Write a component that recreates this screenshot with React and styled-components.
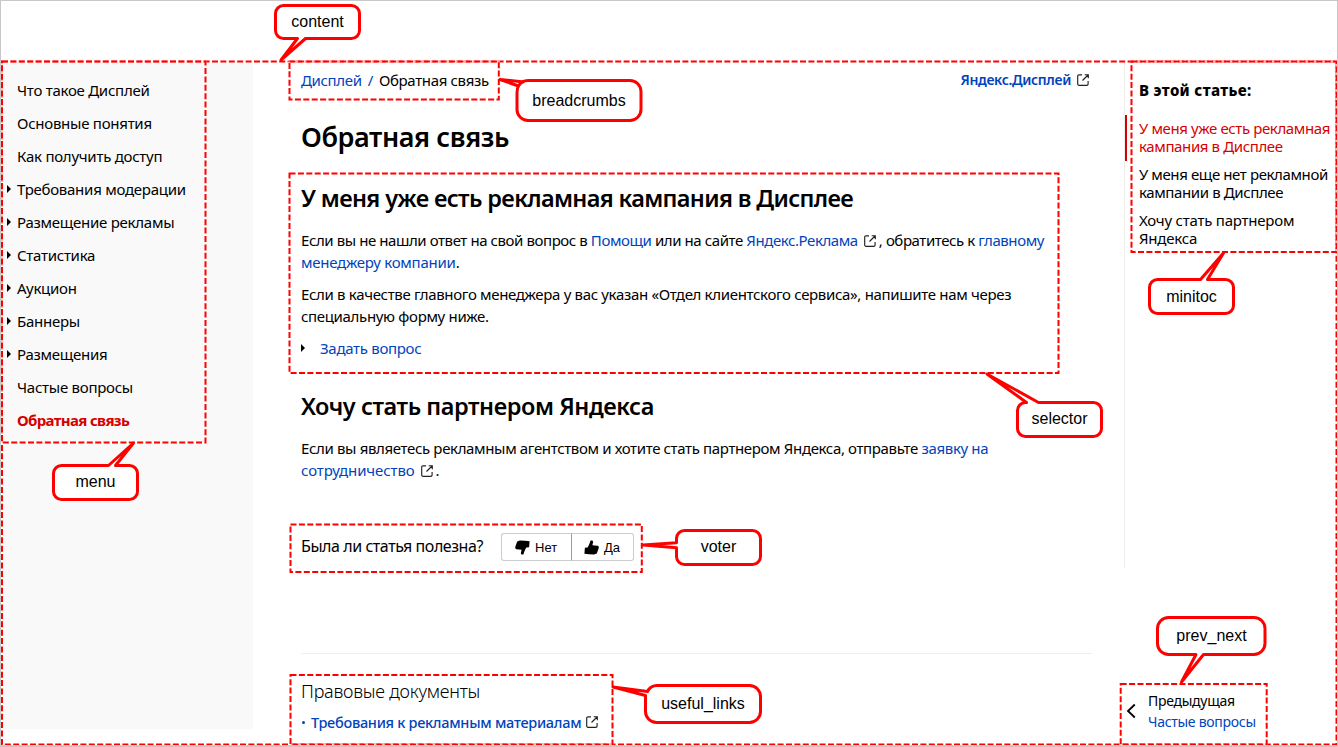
import React from "react";
import styled, { createGlobalStyle } from "styled-components";

const GlobalStyle = createGlobalStyle`
  *, *::before, *::after { box-sizing: border-box; }
  body { margin: 0; background: #fff; color: #000; }
`;

const BLUE = "#0044bb";
const RED = "#d60000";
const MARK = "#ff0000";

const Page = styled.div`
  position: relative;
  width: 1338px;
  height: 747px;
  overflow: hidden;
  border: 1px solid #c8c8c8;
  border-bottom-width: 2px;
  font-family: "Noto Sans", "Open Sans", sans-serif;
  font-size: 15px;
  line-height: 22px;
`;

const Header = styled.header`
  height: 60px;
`;

const Columns = styled.div`
  display: flex;
`;

const Sidebar = styled.nav`
  width: 252px;
  height: 668px;
  padding: 12px 0 0 6px;
  background: #f9f9f9;
`;

const MenuItem = styled.a`
  display: flex;
  align-items: center;
  height: 33px;
  color: ${(p) => (p.$active ? RED : "#000")};
  font-weight: ${(p) => (p.$active ? 700 : 400)};
  letter-spacing: ${(p) => (p.$active ? "-0.64px" : "-0.26px")};
`;

const Marker = styled.i`
  width: 4px;
  height: 8px;
  margin-right: ${(p) => p.$gap}px;
  border: solid transparent;
  border-width: 4px 0 4px 4px;
  border-left-color: ${(p) => (p.$hidden ? "transparent" : "#000")};
`;

const Main = styled.main`
  width: 791px;
  margin-left: 48px;
`;

const TopRow = styled.div`
  display: flex;
  justify-content: space-between;
  padding: 8px 3px 0 0;
`;

const Crumbs = styled.div`
  letter-spacing: -0.35px;
`;

const Link = styled.a`
  color: ${BLUE};
`;

const Slash = styled.span`
  margin: 0 6px;
  color: ${BLUE};
`;

const ServiceLink = styled.a`
  color: ${BLUE};
  font-size: 14px;
  font-weight: 600;
  letter-spacing: -0.35px;
`;

const Title = styled.h1`
  margin: 28px 0 0;
  font-size: 27px;
  font-weight: 600;
  line-height: 36px;
  letter-spacing: -0.4px;
`;

const Heading = styled.h2`
  margin: ${(p) => p.$top}px 0 15px;
  font-size: 23.5px;
  font-weight: 600;
  line-height: 32px;
  letter-spacing: ${(p) => p.$spacing}px;
`;

const Text = styled.p`
  width: 770px;
  margin: 0 0 10px;
`;

const Line = styled.span`
  display: block;
  white-space: nowrap;
  letter-spacing: ${(p) => p.$spacing}px;
`;

const Spoiler = styled.div`
  display: flex;
  align-items: center;
  letter-spacing: -0.3px;
`;

const Voter = styled.div`
  display: flex;
  align-items: center;
  height: 28px;
  margin-top: 52px;
`;

const Question = styled.span`
  width: 200px;
  padding-bottom: 2px;
  font-size: 16px;
  letter-spacing: -0.44px;
`;

const VoteButton = styled.button`
  display: flex;
  align-items: center;
  gap: 5px;
  width: ${(p) => p.$width}px;
  height: 28px;
  padding: 0 0 0 ${(p) => p.$pad}px;
  border: 1px solid #ccc;
  border-left: ${(p) => (p.$last ? "1px solid #999" : "1px solid #ccc")};
  border-right-width: ${(p) => (p.$last ? 1 : 0)}px;
  border-radius: ${(p) => (p.$last ? "0 3px 3px 0" : "3px 0 0 3px")};
  background: #fff;
  color: #000;
  font: 13px "Liberation Sans", Arial, sans-serif;
`;

const Footer = styled.footer`
  margin-top: 92px;
  padding-top: 26px;
  border-top: 1px solid #eee;
`;

const FooterTitle = styled.div`
  font-size: 18px;
  font-weight: 300;
  letter-spacing: -0.23px;
`;

const FooterLink = styled.div`
  display: flex;
  align-items: center;
  margin-top: 9px;
  color: ${BLUE};
  font-size: 14.5px;
  font-weight: 500;
  letter-spacing: -0.28px;
`;

const Bullet = styled.i`
  width: 3px;
  height: 3px;
  margin: 1px 6px 0 1px;
  border-radius: 50%;
  background: ${BLUE};
`;

const Aside = styled.aside`
  width: 213px;
  margin-left: 32px;
`;

const MiniToc = styled.div`
  height: 507px;
  padding-top: 18px;
  border-left: 1px solid #eee;
`;

const TocTitle = styled.div`
  padding-left: 14px;
  margin-bottom: 14px;
  font-weight: 800;
  letter-spacing: 0.35px;
`;

const TocItem = styled.a`
  display: block;
  padding: 4px 0 6px 12px;
  border-left: 2px solid ${(p) => (p.$active ? RED : "transparent")};
  color: ${(p) => (p.$active ? RED : "#000")};
  line-height: 18px;
  letter-spacing: ${(p) => p.$spacing}px;
  white-space: nowrap;
`;

const PrevNext = styled.div`
  display: flex;
  align-items: center;
  gap: 12px;
  margin: 122px 0 0 2px;
  font-size: 14px;
  line-height: 21px;
  letter-spacing: -0.28px;
`;

const Outlines = styled.svg`
  position: absolute;
  left: -1px;
  top: -1px;
  fill: none;
`;

const Bubble = styled.div`
  position: absolute;
  left: ${(p) => p.$x - 1}px;
  top: ${(p) => p.$y - 1}px;
  display: flex;
  align-items: center;
  justify-content: center;
  width: ${(p) => p.$w}px;
  height: ${(p) => p.$h}px;
  padding-bottom: 1px;
  font: 16px/20px "Liberation Sans", Arial, sans-serif;
`;

const ExternalSvg = styled.svg`
  margin: 0 ${(p) => p.$after}px 0 ${(p) => p.$before}px;
  vertical-align: -1px;
  fill: none;
  stroke: #222;
  stroke-width: 1.15;
`;

const External = ({ before = 6, after = 0 }) => (
  <ExternalSvg width="12" height="12" viewBox="0 0 12 12" $before={before} $after={after}>
    <path d="M5 .8H2A1.3 1.3 0 0 0 .7 2.1V10A1.3 1.3 0 0 0 2 11.3H9.8A1.3 1.3 0 0 0 11.1 10V7M5.5 6.5 11 1M7.7.7H11.3V4.3" />
  </ExternalSvg>
);

const Thumb = ({ up }) => (
  <svg width="15" height="15" viewBox="0 0 15 15">
    <path
      transform={up ? "rotate(180 7.5 7.5)" : undefined}
      d="M2.2 1.4 4.8.4 10 .8 14.6 1.2 14.1 7.3 11.4 7.6C10 9.6 9.2 12 8.4 14.4 7 14.9 5.8 14.4 5.9 13L6.6 9.8 1.4 9.2C.2 9 0 7.6.4 6.6Z"
    />
  </svg>
);

const menu = [
  ["Что такое Дисплей"],
  ["Основные понятия"],
  ["Как получить доступ"],
  ["Требования модерации", true],
  ["Размещение рекламы", true],
  ["Статистика", true],
  ["Аукцион", true],
  ["Баннеры", true],
  ["Размещения", true],
  ["Частые вопросы"],
  ["Обратная связь"],
];

const outlines = [
  [2, 61.5, 1334.5, 683],
  [2, 61.5, 203.5, 381],
  [289.5, 61.5, 209.3, 38],
  [289.5, 173.5, 769, 199.5],
  [1131.5, 61.5, 205, 190.5],
  [290.5, 524.5, 351.3, 47.5],
  [290.5, 675, 322, 69.5],
  [1120.7, 684, 146, 60.5],
];

/* Each path is the bubble outline with its pointer, in page coordinates. */
const callouts = [
  { t: "content", b: [274, 4, 87, 36], d: "M297.5 38.5H283.5a8 8 0 0 1-8-8V13.5a8 8 0 0 1 8-8H351.5a8 8 0 0 1 8 8V30.5a8 8 0 0 1-8 8H305.5L281 60Z" },
  { t: "breadcrumbs", b: [515, 80, 128, 43], d: "M518.5 86C520.5 82.5 524 80.5 528 80.5H630a11 11 0 0 1 11 11V109.5a11 11 0 0 1-11 11H528a11 11 0 0 1-11-11V92.5C517 90 517.3 88 518.5 86L500 79.5 524 82" },
  { t: "menu", b: [52, 464, 87, 37], d: "M108.5 465.5H61.5a8 8 0 0 0-8 8V491.5a8 8 0 0 0 8 8H129.5a8 8 0 0 0 8-8V473.5a8 8 0 0 0-8-8H115.5L133.5 443Z" },
  { t: "minitoc", b: [1148, 279, 87, 37], d: "M1200.5 279.5H1157.5a8 8 0 0 0-8 8V305.5a8 8 0 0 0 8 8H1225.5a8 8 0 0 0 8-8V287.5a8 8 0 0 0-8-8H1207.5L1223.5 253Z" },
  { t: "selector", b: [1016, 401, 87, 37], d: "M1026.5 402.5H1025.5a8 8 0 0 0-8 8V428.5a8 8 0 0 0 8 8H1093.5a8 8 0 0 0 8-8V410.5a8 8 0 0 0-8-8H1038.5L987 374Z" },
  { t: "voter", b: [675, 529, 87, 37], d: "M676.5 542.8V538.5a8 8 0 0 1 8-8H752.5a8 8 0 0 1 8 8V556.5a8 8 0 0 1-8 8H684.5a8 8 0 0 1-8-8V547.7L643 545Z" },
  { t: "useful_links", b: [644, 684, 118, 40], d: "M647.5 691.5C649.5 687.5 653 685.5 657 685.5H749.5a11 11 0 0 1 11 11V711.5a11 11 0 0 1-11 11H656.5a11 11 0 0 1-11-11V695.5L613 687Z" },
  { t: "prev_next", b: [1156, 616, 111, 40], d: "M1196 654.5H1168.5a11 11 0 0 1-11-11V628.5a11 11 0 0 1 11-11H1254a11 11 0 0 1 11 11V643.5a11 11 0 0 1-11 11H1203.5L1181.5 682Z" },
];

export default function App() {
  return (
    <Page>
      <GlobalStyle />
      <Header />
      <Columns>
        <Sidebar>
          {menu.map(([label, nested], i) => (
            <MenuItem key={label} $active={i === menu.length - 1}>
              <Marker $gap={6} $hidden={!nested} />
              {label}
            </MenuItem>
          ))}
        </Sidebar>

        <Main>
          <TopRow>
            <Crumbs>
              <Link>Дисплей</Link>
              <Slash>/</Slash>
              Обратная связь
            </Crumbs>
            <ServiceLink>
              Яндекс.Дисплей
              <External />
            </ServiceLink>
          </TopRow>
          <Title>Обратная связь</Title>

          <Heading $top={27} $spacing={-0.64}>
            У меня уже есть рекламная кампания в Дисплее
          </Heading>
          <Text>
            <Line $spacing={-0.42}>
              Если вы не нашли ответ на свой вопрос в <Link>Помощи</Link> или на сайте{" "}
              <Link>Яндекс.Реклама</Link>
              <External after={3} />, обратитесь к <Link>главному</Link>
            </Line>
            <Line $spacing={-0.25}>
              <Link>менеджеру компании</Link>.
            </Line>
          </Text>
          <Text>
            <Line $spacing={-0.33}>
              Если в качестве главного менеджера у вас указан «Отдел клиентского сервиса», напишите нам через
            </Line>
            <Line $spacing={-0.33}>специальную форму ниже.</Line>
          </Text>
          <Spoiler>
            <Marker $gap={15} />
            <Link>Задать вопрос</Link>
          </Spoiler>

          <Heading $top={31} $spacing={-0.44}>
            Хочу стать партнером Яндекса
          </Heading>
          <Text>
            <Line $spacing={-0.355}>
              Если вы являетесь рекламным агентством и хотите стать партнером Яндекса, отправьте{" "}
              <Link>заявку на</Link>
            </Line>
            <Line $spacing={-0.1}>
              <Link>сотрудничество</Link>
              <External after={3} />.
            </Line>
          </Text>

          <Voter>
            <Question>Была ли статья полезна?</Question>
            <VoteButton $width={70} $pad={13}>
              <Thumb />
              Нет
            </VoteButton>
            <VoteButton $width={63} $pad={12} $last>
              <Thumb up />
              Да
            </VoteButton>
          </Voter>

          <Footer>
            <FooterTitle>Правовые документы</FooterTitle>
            <FooterLink>
              <Bullet />
              Требования к рекламным материалам
              <External before={5} />
            </FooterLink>
          </Footer>
        </Main>

        <Aside>
          <MiniToc>
            <TocTitle>В этой статье:</TocTitle>
            <TocItem $active $spacing={-0.38}>У меня уже есть рекламная<br />кампания в Дисплее</TocItem>
            <TocItem $spacing={-0.39}>У меня еще нет рекламной<br />кампании в Дисплее</TocItem>
            <TocItem $spacing={-0.22}>Хочу стать партнером<br />Яндекса</TocItem>
          </MiniToc>
          <PrevNext>
            <svg width="10" height="16" viewBox="0 0 10 16" fill="none" stroke="#000" strokeWidth="1.8">
              <path d="M8.8 1.5 2 8 8.8 14.5" />
            </svg>
            <div>
              <div>Предыдущая</div>
              <Link>Частые вопросы</Link>
            </div>
          </PrevNext>
        </Aside>
      </Columns>

      <Outlines width="1338" height="747">
        {outlines.map(([x, y, width, height], i) => (
          <g key={i} strokeWidth="2">
            <rect x={x} y={y} width={width} height={height} stroke="#fff" strokeOpacity="0.7" />
            <rect x={x} y={y} width={width} height={height} stroke={MARK} strokeDasharray="6 2.4" />
          </g>
        ))}
        {callouts.map((c) => (
          <path key={c.t} d={c.d} fill="#fff" stroke={MARK} strokeWidth="3" strokeLinejoin="round" />
        ))}
      </Outlines>
      {callouts.map((c) => (
        <Bubble key={c.t} $x={c.b[0]} $y={c.b[1]} $w={c.b[2]} $h={c.b[3]}>
          {c.t}
        </Bubble>
      ))}
    </Page>
  );
}
